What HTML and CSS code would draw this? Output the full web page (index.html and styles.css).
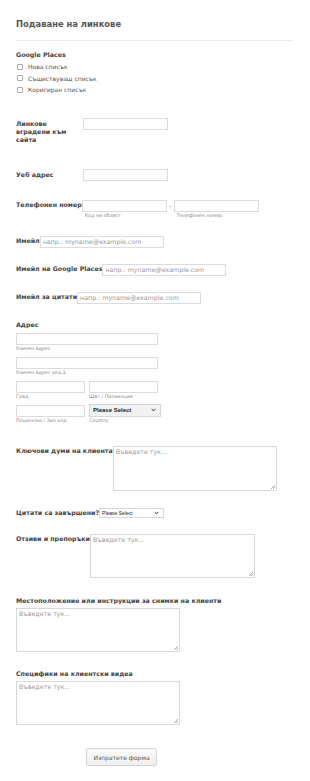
FILE: index.html
```html
<!DOCTYPE html>
<html lang="bg">
<head>
<meta charset="utf-8">
<title>Подаване на линкове</title>
<link rel="stylesheet" href="styles.css">
</head>
<body>
<form class="page">
  <h1 class="title">Подаване на линкове</h1>
  <div class="divider"></div>

  <div class="field f-google">
    <div class="label-top">Google Places</div>
    <div class="checks">
      <label class="check"><span class="cb"></span>Нова списък</label>
      <label class="check"><span class="cb"></span>Съществуващ списък</label>
      <label class="check"><span class="cb"></span>Коригиран списък</label>
    </div>
  </div>

  <div class="field row f-links">
    <div class="label label-fixed">Линкове вградени към сайта</div>
    <div class="input w85"></div>
  </div>

  <div class="field row f-web">
    <div class="label label-fixed">Уеб адрес</div>
    <div class="input w85"></div>
  </div>

  <div class="field row f-phone">
    <div class="label">Телефонен номер</div>
    <div class="phone">
      <div class="phone-part">
        <div class="input w85"></div>
        <div class="sub">Код на област</div>
      </div>
      <div class="dash">-</div>
      <div class="phone-part">
        <div class="input w85"></div>
        <div class="sub">Телефонен номер</div>
      </div>
    </div>
  </div>

  <div class="field row f-email1">
    <div class="label">Имейл</div>
    <div class="input w124 ph">напр.: myname@example.com</div>
  </div>

  <div class="field row f-email2">
    <div class="label">Имейл на Google Places</div>
    <div class="input w124 ph">напр.: myname@example.com</div>
  </div>

  <div class="field row f-email3">
    <div class="label">Имейл за цитати</div>
    <div class="input w124 ph">напр.: myname@example.com</div>
  </div>

  <div class="field f-address">
    <div class="label-top">Адрес</div>
    <div class="addr">
      <div class="addr-line">
        <div class="input w142"></div>
        <div class="sub">Уличен адрес</div>
      </div>
      <div class="addr-line">
        <div class="input w142"></div>
        <div class="sub">Уличен адрес ред 2</div>
      </div>
      <div class="addr-pair">
        <div class="addr-half">
          <div class="input w69"></div>
          <div class="sub">Град</div>
        </div>
        <div class="addr-half">
          <div class="input w69"></div>
          <div class="sub">Щат / Провинция</div>
        </div>
      </div>
      <div class="addr-pair">
        <div class="addr-half">
          <div class="input w69"></div>
          <div class="sub">Пощенски / Зип код</div>
        </div>
        <div class="addr-half">
          <div class="select select-country"><span>Please Select</span>
            <svg class="chev" viewBox="0 0 8 6" width="5" height="4"><path d="M1 1.2 L4 4.4 L7 1.2" fill="none" stroke="#333" stroke-width="1.6"/></svg>
          </div>
          <div class="sub sub-country">Country</div>
        </div>
      </div>
    </div>
  </div>

  <div class="field row f-keywords">
    <div class="label">Ключови думи на клиента</div>
    <div class="textarea w164 h45"><span>Въведете тук...</span><span class="grip"></span></div>
  </div>

  <div class="field row f-quotes">
    <div class="label">Цитати са завършени?</div>
    <div class="select select-small"><span>Please Select</span>
      <svg class="chev" viewBox="0 0 8 6" width="5" height="4"><path d="M1 1.2 L4 4.4 L7 1.2" fill="none" stroke="#333" stroke-width="1.6"/></svg>
    </div>
  </div>

  <div class="field row f-reviews">
    <div class="label">Отзиви и препоръки</div>
    <div class="textarea w165 h44"><span>Въведете тук...</span><span class="grip"></span></div>
  </div>

  <div class="field f-location">
    <div class="label-top">Местоположение или инструкции за снимки на клиенти</div>
    <div class="textarea w164 h44 mt3"><span>Въведете тук...</span><span class="grip"></span></div>
  </div>

  <div class="field f-video">
    <div class="label-top">Специфики на клиентски видеа</div>
    <div class="textarea w164 h44 mt3"><span>Въведете тук...</span><span class="grip"></span></div>
  </div>

  <div class="field f-submit">
    <button type="button" class="submit">Изпратете форма</button>
  </div>
</form>
</body>
</html>
```

FILE: styles.css
```css
* { box-sizing: border-box; }

body {
  margin: 0;
  background: #fff;
  font-family: "DejaVu Sans", Verdana, sans-serif;
  color: #555;
}

.page {
  padding: 0 17px 40px 16px;
}

.title {
  margin: 0;
  padding-top: 19px;
  font-size: 8.4px;
  line-height: 11px;
  font-weight: bold;
  color: #555;
}

.divider {
  margin-top: 10px;
  height: 1px;
  background: #ececec;
}

.row {
  display: flex;
  align-items: flex-start;
}

.label, .label-top {
  font-size: 6.3px;
  line-height: 8px;
  font-weight: bold;
  color: #444;
  white-space: nowrap;
}
.label { padding-top: 1px; }
.label-fixed {
  width: 67px;
  padding-top: 2px;
  padding-right: 10px;
  white-space: normal;
}

.f-google { margin-top: 10px; }
.checks {
  margin-top: 2px;
  padding-left: 1px;
}
.check {
  display: flex;
  align-items: center;
  height: 11.5px;
  font-size: 6px;
  color: #555;
}
.cb {
  width: 6px;
  height: 6px;
  border: 1px solid #aaa;
  border-radius: 1px;
  margin-right: 5px;
  background: #fff;
}

.input {
  height: 12px;
  border: 1px solid #dcdcdc;
  background: #fff;
}
.w85 { width: 85px; }
.w124 { width: 124px; }
.w142 { width: 142px; }
.w69 { width: 69px; }
.ph {
  font-size: 6.3px;
  line-height: 10px;
  color: #999;
  padding-left: 2px;
  white-space: nowrap;
  overflow: hidden;
}

.f-links { margin-top: 22px; }
.f-web { margin-top: 25px; }
.f-phone { margin-top: 19px; }
.phone { display: flex; }
.dash {
  width: 7px;
  text-align: center;
  font-size: 6px;
  line-height: 12px;
  color: #777;
}
.sub {
  margin-top: 1px;
  font-size: 4.8px;
  line-height: 6px;
  color: #888;
  white-space: nowrap;
}
.phone-part .sub { padding-left: 3px; }

.f-email1 { margin-top: 17px; }
.f-email2 { margin-top: 16px; }
.f-email3 { margin-top: 16px; }

.f-address { margin-top: 17px; }
.addr { margin-top: 4px; }
.addr-line, .addr-pair { margin-bottom: 5px; }
.addr-pair { display: flex; gap: 4px; }

.select {
  position: relative;
  display: flex;
  align-items: center;
  border: 1px solid #d6d6d6;
  font-family: "Liberation Sans", Arial, sans-serif;
  color: #222;
}
.select .chev {
  position: absolute;
  right: 4px;
  top: 50%;
  margin-top: -2px;
}
.select-country {
  width: 72px;
  height: 13px;
  margin-top: -1px;
  padding-left: 3px;
  background: #f1f1f1;
  font-size: 6px;
  font-weight: bold;
}
.sub-country { margin-top: 1px; }

.textarea {
  position: relative;
  border: 1px solid #d8d8d8;
  background: #fff;
  font-size: 6.3px;
  line-height: 8px;
  color: #999;
  padding: 1px 2px;
}
.w164 { width: 164px; }
.w165 { width: 165px; }
.h45 { height: 45px; }
.h44 { height: 44px; }
.mt3 { margin-top: 3px; }
.grip {
  position: absolute;
  right: 1px;
  bottom: 1px;
  width: 4px;
  height: 4px;
  background: linear-gradient(135deg, transparent 45%, #aaa 45%, #aaa 55%, transparent 55%, transparent 70%, #aaa 70%, #aaa 80%, transparent 80%);
}

.f-keywords { margin-top: 22px; }
.f-quotes { margin-top: 17px; }
.select-small {
  width: 65px;
  height: 10px;
  padding-left: 2px;
  background: #fff;
  font-size: 5px;
}
.f-reviews { margin-top: 16px; }
.f-location { margin-top: 19px; }
.f-video { margin-top: 18px; }

.f-submit { margin-top: 20px; padding-left: 70px; }
.submit {
  width: 71px;
  height: 18px;
  padding: 0;
  border: 1px solid #d4d4d4;
  border-radius: 2px;
  background: linear-gradient(#fafafa, #eeeeee);
  font-family: "DejaVu Sans", Verdana, sans-serif;
  font-size: 6px;
  color: #555;
}
```
